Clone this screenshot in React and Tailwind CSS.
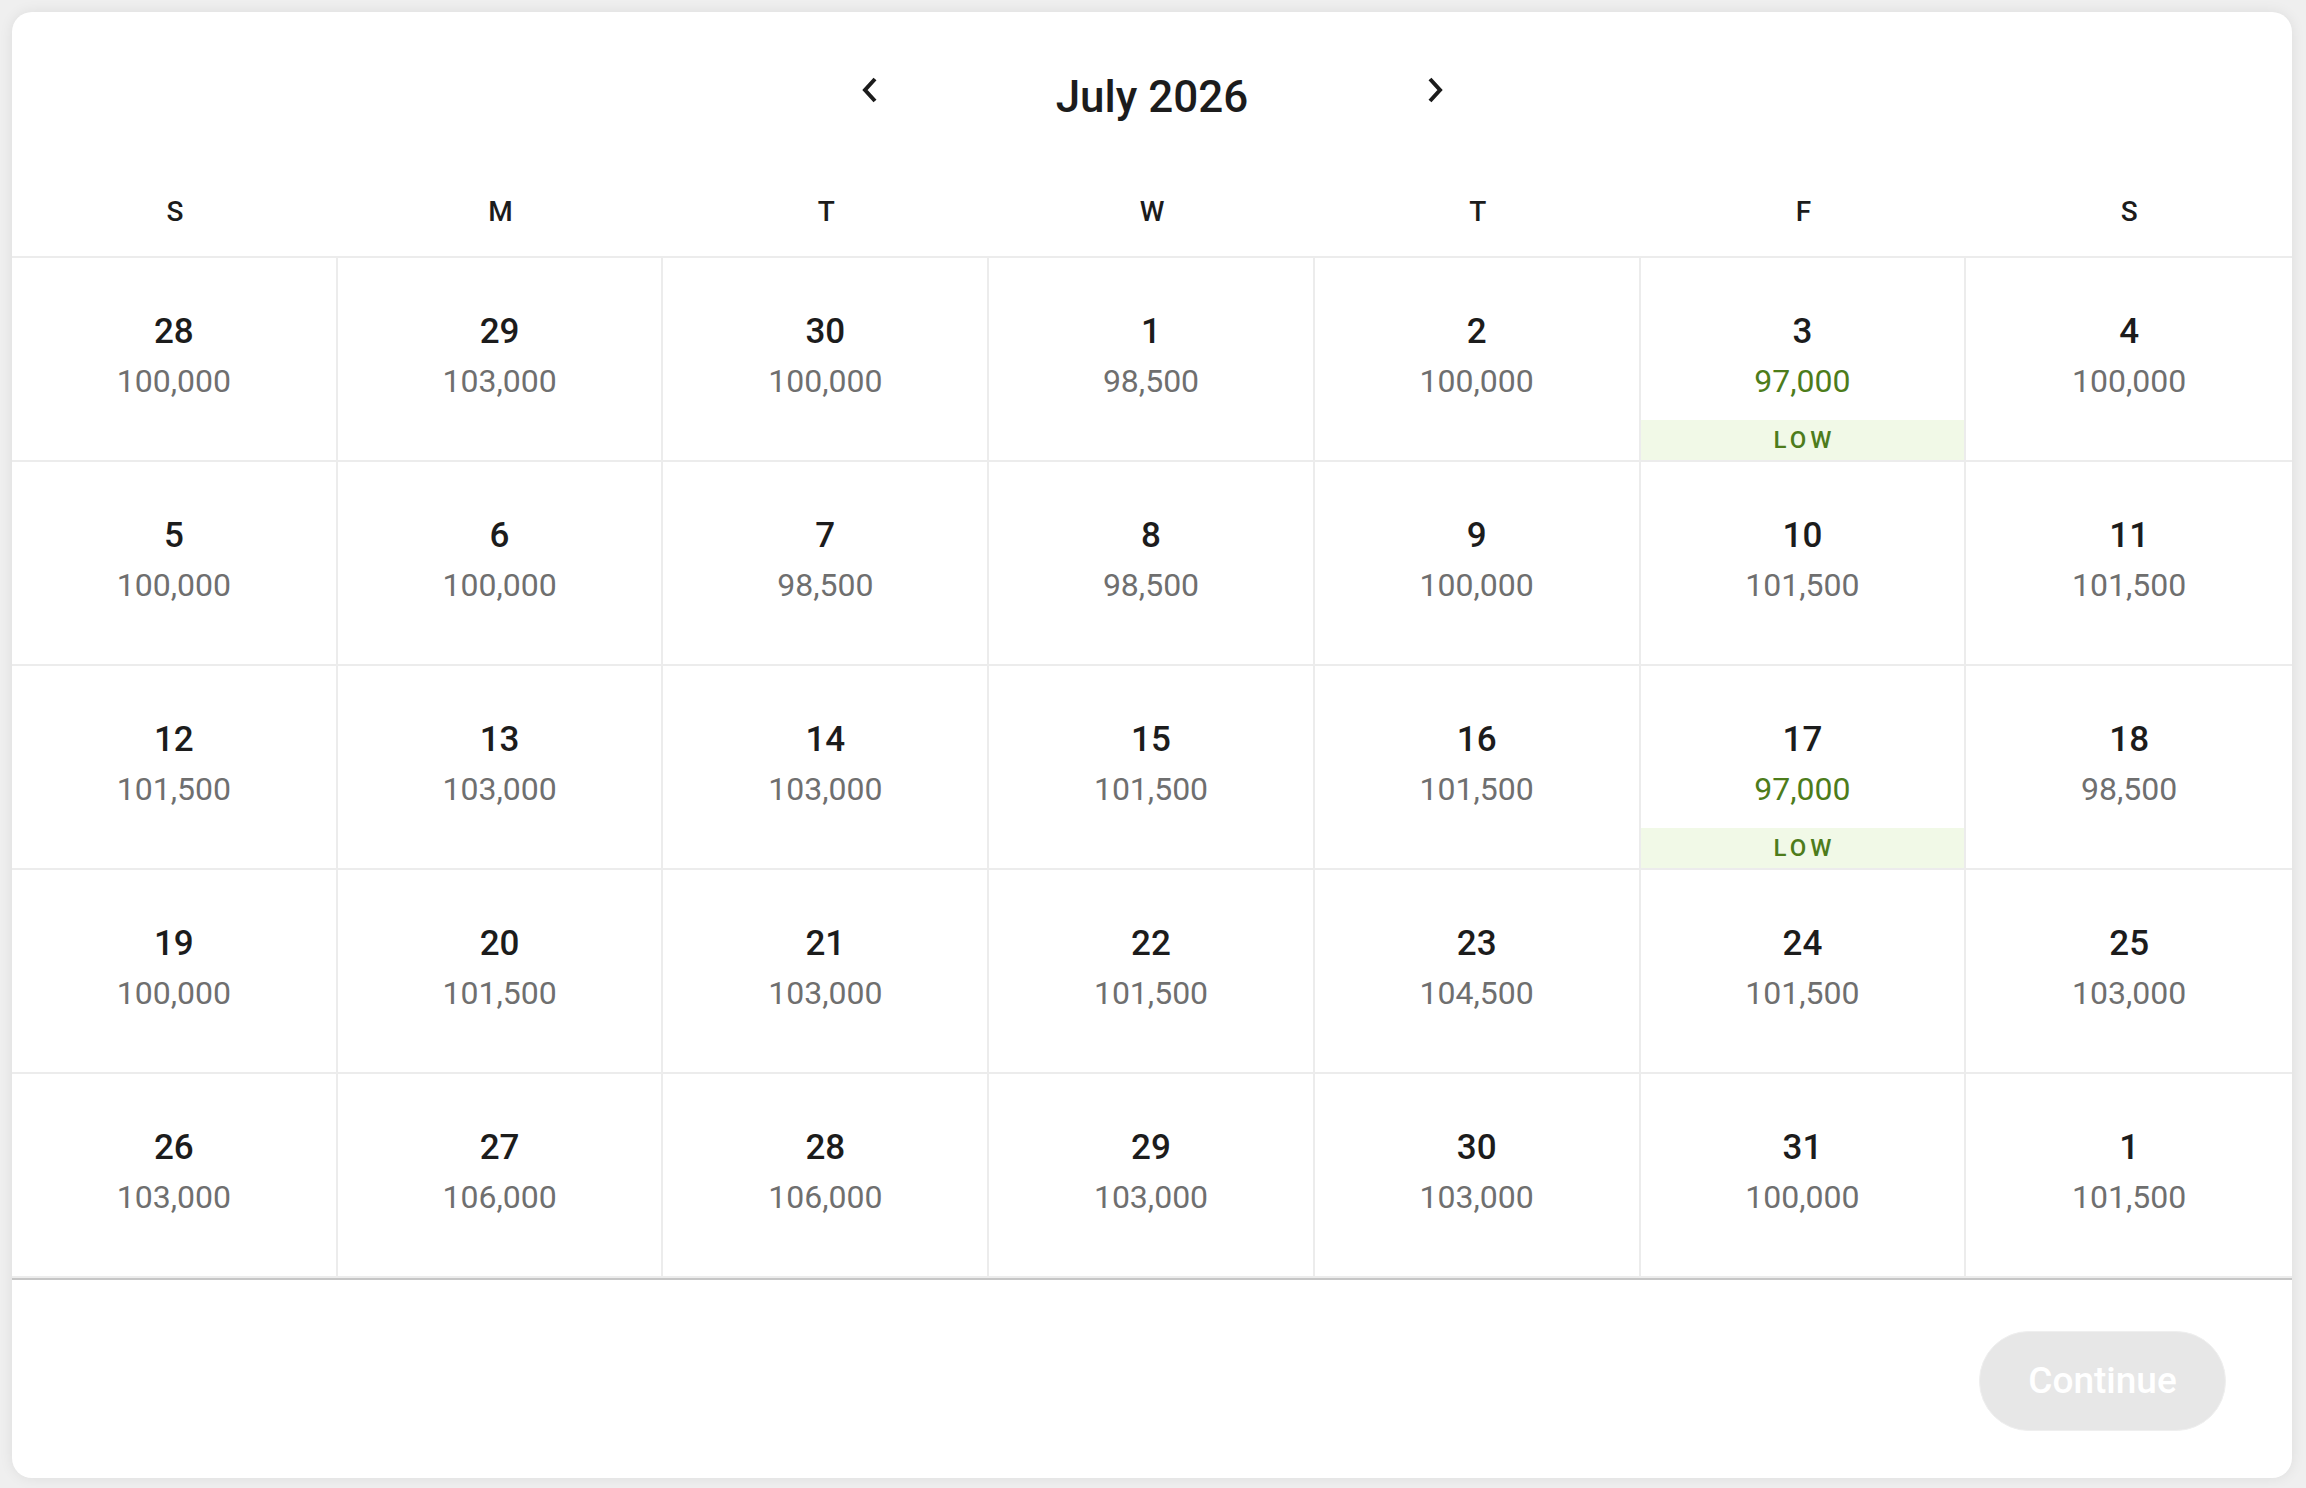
import React from "react";

const rows = [
  [["28", "100,000"], ["29", "103,000"], ["30", "100,000"], ["1", "98,500"], ["2", "100,000"], ["3", "97,000", true], ["4", "100,000"]],
  [["5", "100,000"], ["6", "100,000"], ["7", "98,500"], ["8", "98,500"], ["9", "100,000"], ["10", "101,500"], ["11", "101,500"]],
  [["12", "101,500"], ["13", "103,000"], ["14", "103,000"], ["15", "101,500"], ["16", "101,500"], ["17", "97,000", true], ["18", "98,500"]],
  [["19", "100,000"], ["20", "101,500"], ["21", "103,000"], ["22", "101,500"], ["23", "104,500"], ["24", "101,500"], ["25", "103,000"]],
  [["26", "103,000"], ["27", "106,000"], ["28", "106,000"], ["29", "103,000"], ["30", "103,000"], ["31", "100,000"], ["1", "101,500"]],
];

const weekdays = ["S", "M", "T", "W", "T", "F", "S"];

function Chevron({ dir }) {
  return (
    <svg width="16" height="26" viewBox="0 0 16 26" fill="none">
      <polyline
        points={dir === "left" ? "13,2 3,13 13,24" : "3,2 13,13 3,24"}
        stroke="#1c1c1c"
        strokeWidth="4"
        strokeLinejoin="miter"
        strokeLinecap="butt"
      />
    </svg>
  );
}

export default function App() {
  return (
    <div
      className="min-h-screen w-full bg-[#efefef] pl-[12px] pt-[12px]"
      style={{ fontFamily: "Roboto, 'Liberation Sans', Arial, sans-serif" }}
    >
      <div className="w-[2280px] h-[1466px] bg-white rounded-[20px] overflow-hidden shadow-[0_0_14px_rgba(0,0,0,0.08)] flex flex-col">
        {/* Header */}
        <div className="pt-[63px] h-[107px] flex items-center justify-center">
          <button className="w-[48px] h-[44px] flex items-center justify-center -translate-y-[7px]">
            <Chevron dir="left" />
          </button>
          <div className="w-[517px] text-center text-[44px] leading-[44px] font-medium text-[#1c1c1c]">
            July 2026
          </div>
          <button className="w-[48px] h-[44px] flex items-center justify-center -translate-y-[7px]">
            <Chevron dir="right" />
          </button>
        </div>

        {/* Weekdays */}
        <div className="grid grid-cols-7 mt-[79px] mb-[30px] h-[28px]">
          {weekdays.map((d, i) => (
            <div key={i} className="text-center text-[28px] leading-[28px] font-medium text-[#1c1c1c]">
              {d}
            </div>
          ))}
        </div>

        {/* Grid */}
        <div className="border-t-2 border-[#ececec]">
          {rows.map((row, ri) => (
            <div key={ri} className="grid grid-cols-7">
              {row.map(([day, price, low], ci) => (
                <div
                  key={ci}
                  className={
                    "h-[204px] border-b-2 border-[#ececec] flex flex-col items-center pt-[56px] " +
                    (ci < 6 ? "border-r-2" : "")
                  }
                >
                  <div className="text-[35px] leading-[36px] font-medium text-[#1c1c1c]">{day}</div>
                  <div
                    className={
                      "mt-[13px] text-[32px] leading-[36px] " +
                      (low ? "text-[#4d7c1b]" : "text-[#6f6f6f]")
                    }
                  >
                    {price}
                  </div>
                  {low && (
                    <div className="mt-auto w-full h-[40px] bg-[#f1f9e7] flex items-center justify-center text-[24px] leading-[40px] font-medium tracking-[4px] pl-[4px] text-[#4d7c1b]">
                      LOW
                    </div>
                  )}
                </div>
              ))}
            </div>
          ))}
        </div>

        {/* Footer */}
        <div className="border-t-2 border-[#c6c6c6] flex justify-end pt-[51px] pr-[66px]">
          <button className="w-[247px] h-[100px] rounded-full bg-[#e7e7e7] border border-[#efefef] text-white text-[37px] font-medium flex items-center justify-center">
            Continue
          </button>
        </div>
      </div>
    </div>
  );
}
